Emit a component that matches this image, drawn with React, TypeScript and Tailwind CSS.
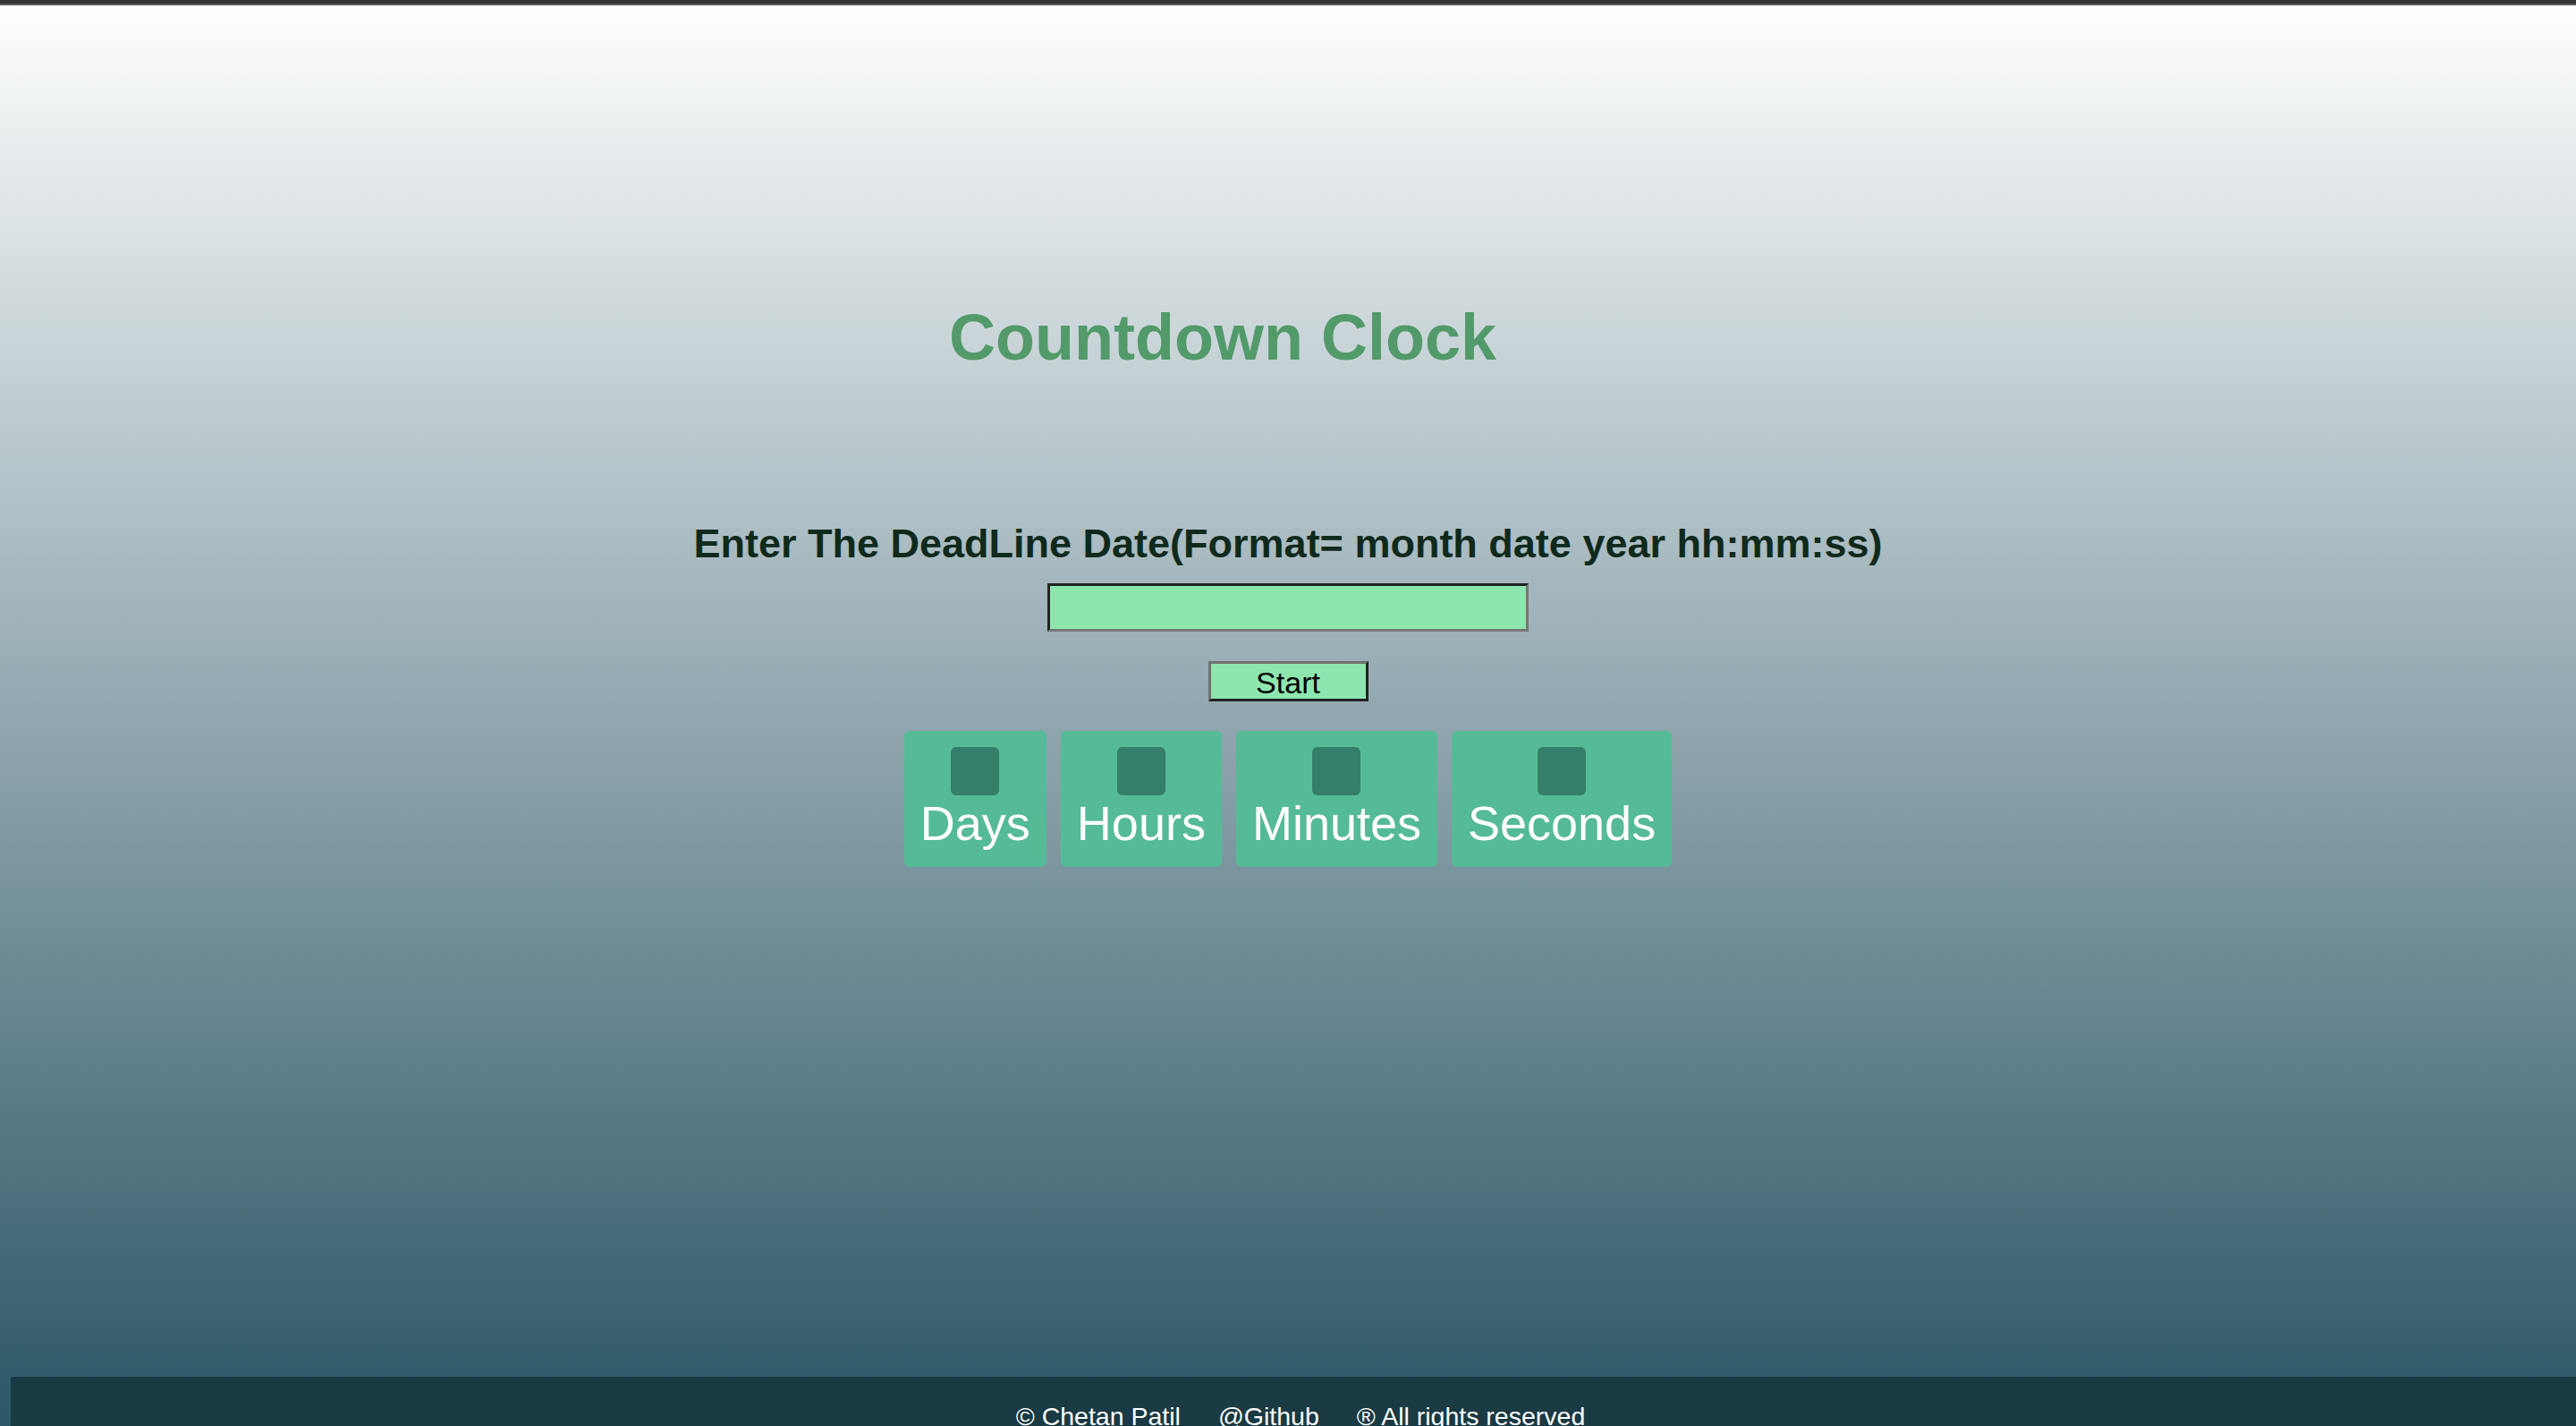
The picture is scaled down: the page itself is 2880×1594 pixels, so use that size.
import React from "react";

export default function App() {
  const units = ["Days", "Hours", "Minutes", "Seconds"];
  return (
    <div className="h-screen w-full overflow-hidden flex flex-col bg-gradient-to-b from-white to-[#2b5766] font-['Liberation_Sans',Arial,sans-serif]">
      <div className="h-[4px] bg-[#333333] shrink-0" />
      <div className="h-[2px] bg-[#5a5a5a] shrink-0" />
      <main className="flex-1 flex flex-col items-center">
        <h1 className="mt-[335px] mr-[146px] text-[72px] leading-none font-bold text-[#529a6a]">
          Countdown Clock
        </h1>
        <h2 className="mt-[172px] text-[45px] leading-none font-bold text-[#0f2a1c]">
          Enter The DeadLine Date(Format= month date year hh:mm:ss)
        </h2>
        <input
          type="text"
          className="mt-[22px] w-[538px] h-[54px] bg-[#8de6ae] border-[3px] border-t-[#222222] border-l-[#222222] border-b-[#777777] border-r-[#777777] outline-none"
        />
        <button className="mt-[33px] w-[179px] h-[45px] pt-[2px] bg-[#8de6ae] border-[3px] border-t-[#707070] border-l-[#707070] border-b-[#222222] border-r-[#222222] text-[34px] leading-none text-black">
          Start
        </button>
        <div className="mt-[33px] flex gap-4">
          {units.map((u) => (
            <div
              key={u}
              className="bg-[#55bb96] rounded-[6px] px-[18px] pt-[18px] pb-[18px] flex flex-col items-center"
            >
              <div className="w-[54px] h-[54px] rounded-[6px] bg-[#357e6a]" />
              <div className="text-[54px] leading-[62px] text-white">{u}</div>
            </div>
          ))}
        </div>
      </main>
      <footer className="shrink-0 ml-[12px] h-[55px] bg-[#1a3a44] flex justify-center gap-[42px] pl-[16px] pt-[30px] text-[28.5px] leading-none text-white whitespace-nowrap">
        <span>© Chetan Patil</span>
        <span>@Github</span>
        <span>® All rights reserved</span>
      </footer>
    </div>
  );
}
